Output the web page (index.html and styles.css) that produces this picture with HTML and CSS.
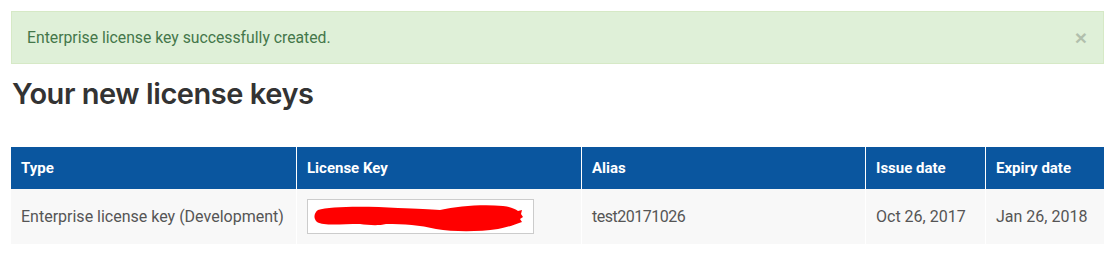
FILE: index.html
```html
<!DOCTYPE html>
<html lang="en">
<head>
<meta charset="utf-8">
<title>License keys</title>
<link rel="stylesheet" href="styles.css">
</head>
<body>
<div class="page">
  <div class="alert">
    <span class="alert-text">Enterprise license key successfully created.</span>
    <button class="close" type="button" aria-label="Close">&times;</button>
  </div>
  <h1 class="title">Your new license keys</h1>
  <table class="keys">
    <colgroup>
      <col class="c1"><col class="c2"><col class="c3"><col class="c4"><col class="c5">
    </colgroup>
    <thead>
      <tr>
        <th>Type</th>
        <th>License Key</th>
        <th>Alias</th>
        <th>Issue date</th>
        <th>Expiry date</th>
      </tr>
    </thead>
    <tbody>
      <tr>
        <td>Enterprise license key (Development)</td>
        <td>
          <div class="keybox">
            <svg class="redact" viewBox="0 0 227 35" width="227" height="35" aria-hidden="true">
              <path fill="#ff0000" d="M10,10 C22,6 60,6 90,8 C110,9 122,9 132,10 C150,6 175,4 195,6 C203,7 207,9 210,11 L214,10 L213,14 L215,17 L212,19 L214,22 C206,25 200,27 190,29 C170,32 146,32 128,29 C112,25 96,24 78,24 C70,26 60,25 52,24 C32,24 16,26 9,22 C5,18 6,13 10,10 Z"/>
            </svg>
          </div>
        </td>
        <td class="alias">test20171026</td>
        <td>Oct 26, 2017</td>
        <td>Jan 26, 2018</td>
      </tr>
    </tbody>
  </table>
</div>
</body>
</html>
```

FILE: styles.css
```css
html, body {
  margin: 0;
  padding: 0;
  background: #ffffff;
}

.page {
  padding: 11px 9px 11px 11px;
  font-family: "Roboto", "Open Sans", sans-serif;
  font-size: 16px;
  color: #555555;
}

.alert {
  display: flex;
  align-items: center;
  justify-content: space-between;
  padding: 15px 16px 15px 15px;
  background: #dff0d8;
  border: 1px solid #d6e9c6;
  color: #44774a;
  line-height: 21px;
}

.alert-text {
  font-size: 15.75px;
}

.close {
  border: 0;
  background: none;
  padding: 0;
  margin: 0;
  font-family: "Liberation Sans", Arial, sans-serif;
  font-size: 21px;
  font-weight: bold;
  line-height: 1;
  color: #000000;
  opacity: 0.2;
  cursor: pointer;
}

.title {
  margin: 11px 0 34px 1px;
  font-family: "Inter", "Lato", sans-serif;
  font-weight: 600;
  font-size: 29px;
  line-height: 38px;
  color: #333333;
  letter-spacing: -0.45px;
}

.keys {
  width: 1093px;
  table-layout: fixed;
  border-collapse: separate;
  border-spacing: 0;
}

.c1 { width: 285px; }
.c2 { width: 285px; }
.c3 { width: 284px; }
.c4 { width: 120px; }
.c5 { width: 119px; }

.keys th,
.keys td {
  text-align: left;
  padding: 0 10px;
  border-left: 1px solid #ffffff;
  white-space: nowrap;
}

.keys th:first-child,
.keys td:first-child {
  border-left: 0;
}

.keys th {
  height: 42px;
  background: #0a569f;
  color: #ffffff;
  font-weight: 700;
  font-size: 15px;
}

.keys td {
  height: 55px;
  background: #f8f8f8;
  color: #555555;
  font-size: 16px;
}

.keys td.alias {
  letter-spacing: -0.5px;
}

.keybox {
  width: 227px;
  height: 35px;
  border: 1px solid #cccccc;
  background: #ffffff;
  box-sizing: border-box;
  overflow: hidden;
}

.redact {
  display: block;
}
```
